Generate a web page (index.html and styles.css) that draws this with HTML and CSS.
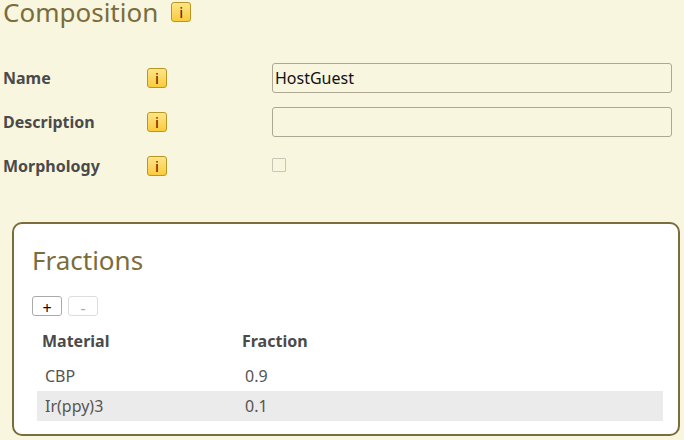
FILE: index.html
```html
<!DOCTYPE html>
<html lang="en">
<head>
    <meta charset="UTF-8">
    <title>Composition</title>
    <link rel="stylesheet" href="styles.css">
</head>
<body>
    <div class="title-row">
        <h1>Composition</h1>
        <span class="info info-title">i</span>
    </div>

    <div class="form-row">
        <label>Name</label>
        <span class="info">i</span>
        <input class="text-input" type="text" value="HostGuest">
    </div>
    <div class="form-row">
        <label>Description</label>
        <span class="info">i</span>
        <input class="text-input" type="text">
    </div>
    <div class="form-row">
        <label>Morphology</label>
        <span class="info">i</span>
        <span class="checkbox"></span>
    </div>

    <div class="panel">
        <h2>Fractions</h2>
        <div class="buttons">
            <button class="btn">+</button>
            <button class="btn btn-disabled">-</button>
        </div>
        <table>
            <thead>
                <tr><th class="col-material">Material</th><th>Fraction</th></tr>
            </thead>
            <tbody>
                <tr><td>CBP</td><td>0.9</td></tr>
                <tr class="selected"><td>Ir(ppy)3</td><td>0.1</td></tr>
            </tbody>
        </table>
    </div>
</body>
</html>
```

FILE: styles.css
```css
html, body {
    height: 100%;
}
body {
    margin: 0;
    padding: 0 4px 0 3px;
    box-sizing: border-box;
    overflow: hidden;
    background-color: #f9f6e0;
    color: #4a4a4a;
    font-family: 'Noto Sans', sans-serif;
    font-size: 16px;
}
.title-row {
    display: flex;
    align-items: center;
    gap: 13px;
    height: 24px;
    margin-bottom: 39px;
}
h1 {
    margin: 0;
    font-size: 26px;
    line-height: 24px;
    font-weight: 400;
    color: #7b6c3c;
}
.info {
    box-sizing: border-box;
    display: flex;
    align-items: center;
    justify-content: center;
    width: 20px;
    height: 20px;
    background: linear-gradient(#fde58a, #fbcb3c);
    border: 1px solid #b8961f;
    border-radius: 3px;
    color: #3a1800;
    font-size: 15px;
}
.form-row {
    display: flex;
    align-items: center;
    height: 30px;
    margin-bottom: 14px;
}
.form-row label {
    width: 144px;
    font-weight: 700;
}
.form-row .info {
    margin-right: 105px;
}
.text-input {
    box-sizing: border-box;
    width: 400px;
    height: 30px;
    padding: 0 2px;
    background-color: #f9f6e0;
    border: 1px solid #aca894;
    border-radius: 3px;
    color: #111;
    font-family: inherit;
    font-size: 16px;
}
.checkbox {
    box-sizing: border-box;
    width: 14px;
    height: 14px;
    margin-top: -2px;
    border: 1px solid #c8c6b4;
    border-radius: 1px;
}
.panel {
    box-sizing: border-box;
    width: 668px;
    height: 214px;
    margin: 41px 0 0 9px;
    padding: 18px 18px 0;
    background-color: #fff;
    border: 2px solid #7b6c3c;
    border-radius: 10px;
}
h2 {
    margin: 0 0 18px;
    font-size: 26px;
    line-height: 36px;
    font-weight: 400;
    color: #7b6c3c;
}
.buttons {
    display: flex;
    gap: 6px;
    margin-bottom: 10px;
}
.btn {
    width: 30px;
    height: 20px;
    padding: 0;
    background-color: #fff;
    border: 1px solid #aaa;
    border-radius: 3px;
    color: #200;
    font-family: inherit;
    font-size: 16px;
}
.btn-disabled {
    border-color: #ddd;
    color: #aaa;
}
table {
    width: 626px;
    margin-left: 5px;
    border-collapse: collapse;
}
th, td {
    padding: 0 8px;
    text-align: left;
    height: 30px;
}
th {
    padding: 0 5px 5px;
}
td {
    color: #555;
}
.col-material {
    width: 190px;
}
.selected {
    background-color: #ebebeb;
}
```
